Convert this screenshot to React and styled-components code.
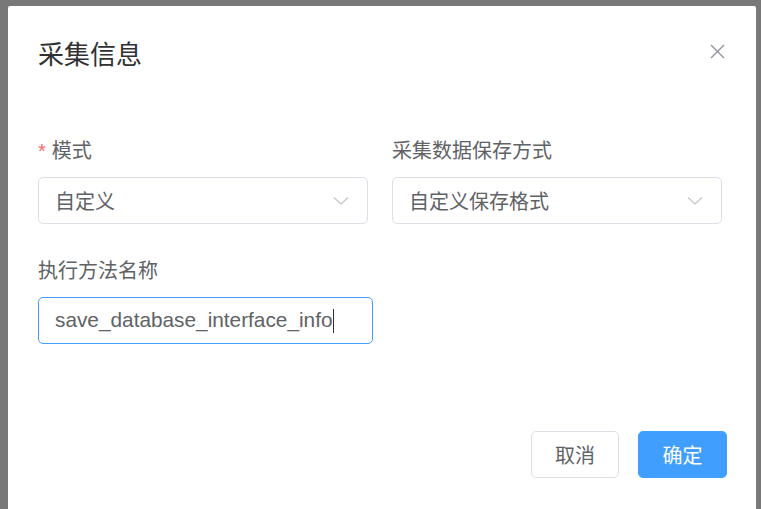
import React from 'react'
import styled, { createGlobalStyle } from 'styled-components'

const GlobalStyle = createGlobalStyle`
  html, body {
    margin: 0;
    padding: 0;
    height: 100%;
    overflow: hidden;
    background: #787878;
  }
  body {
    font-family: "Liberation Sans", "Noto Sans CJK SC", sans-serif;
  }
`

const Page = styled.div`
  height: 509px;
  padding: 6px 5px 0 8px;
  box-sizing: border-box;
`

const Dialog = styled.div`
  background: #fff;
  border-radius: 2px;
  height: 520px;
  box-sizing: border-box;
  padding: 31px 29px 0 30px;
  display: flex;
  flex-direction: column;
`

const Header = styled.div`
  display: flex;
  align-items: flex-start;
  justify-content: space-between;
  height: 36px;
`

const Title = styled.h2`
  margin: 0;
  font-size: 26px;
  font-weight: 400;
  line-height: 36px;
  color: #303133;
`

const Close = styled.button`
  border: 0;
  background: none;
  padding: 0;
  width: 16px;
  height: 16px;
  margin: 6px 2px 0 0;
  display: flex;
  align-items: center;
  justify-content: center;
  cursor: pointer;
`

const Form = styled.div`
  margin-top: 66px;
  display: flex;
  flex-direction: column;
  gap: 35px;
`

const Row = styled.div`
  display: grid;
  grid-template-columns: ${p => p.$cols || '330px 330px'};
  column-gap: 24px;
`

const Field = styled.div`
  display: flex;
  flex-direction: column;
  gap: 14px;
`

const Label = styled.label`
  font-size: 20px;
  line-height: 24px;
  color: #606266;
  height: 24px;
  display: flex;
  align-items: center;
`

const Star = styled.span`
  color: #f56c6c;
  font-size: 20px;
  margin-right: 6px;
  line-height: 24px;
`

const Box = styled.div`
  height: 47px;
  box-sizing: border-box;
  border: 1px solid ${p => (p.$focused ? '#409eff' : '#dcdfe6')};
  border-radius: 5px;
  display: flex;
  align-items: center;
  justify-content: space-between;
  padding: 0 18px 0 16px;
  font-size: ${p => (p.$focused ? '20.8px' : '20px')};
  color: #606266;
`

const Caret = styled.span`
  display: inline-block;
  width: 1.5px;
  height: 24px;
  background: #303133;
  vertical-align: middle;
`

const Footer = styled.div`
  margin-top: 87px;
  display: flex;
  justify-content: flex-end;
  gap: 19px;
`

const Button = styled.button`
  height: 47px;
  width: ${p => (p.$primary ? '89px' : '88px')};
  border-radius: 5px;
  font-family: inherit;
  font-size: 20px;
  border: 1px solid ${p => (p.$primary ? '#409eff' : '#dcdfe6')};
  background: ${p => (p.$primary ? '#409eff' : '#fff')};
  color: ${p => (p.$primary ? '#fff' : '#606266')};
  cursor: pointer;
  padding: 0;
`

const Chevron = () => (
  <svg width='16' height='16' viewBox='0 0 16 16'>
    <polyline points='1,4.5 8,11 15,4.5' fill='none' stroke='#c0c4cc' strokeWidth='1.2' />
  </svg>
)

function App () {
  return (
    <>
      <GlobalStyle />
      <Page>
        <Dialog>
          <Header>
            <Title>采集信息</Title>
            <Close aria-label='close'>
              <svg width='15' height='15' viewBox='0 0 15 15'>
                <path d='M1 1 L14 14 M14 1 L1 14' stroke='#909399' strokeWidth='1.4' />
              </svg>
            </Close>
          </Header>
          <Form>
            <Row>
              <Field>
                <Label><Star>*</Star>模式</Label>
                <Box>自定义<Chevron /></Box>
              </Field>
              <Field>
                <Label>采集数据保存方式</Label>
                <Box>自定义保存格式<Chevron /></Box>
              </Field>
            </Row>
            <Row $cols='335px'>
              <Field>
                <Label>执行方法名称</Label>
                <Box $focused>
                  <span>save_database_interface_info<Caret /></span>
                </Box>
              </Field>
            </Row>
          </Form>
          <Footer>
            <Button>取消</Button>
            <Button $primary>确定</Button>
          </Footer>
        </Dialog>
      </Page>
    </>
  )
}

export default App
